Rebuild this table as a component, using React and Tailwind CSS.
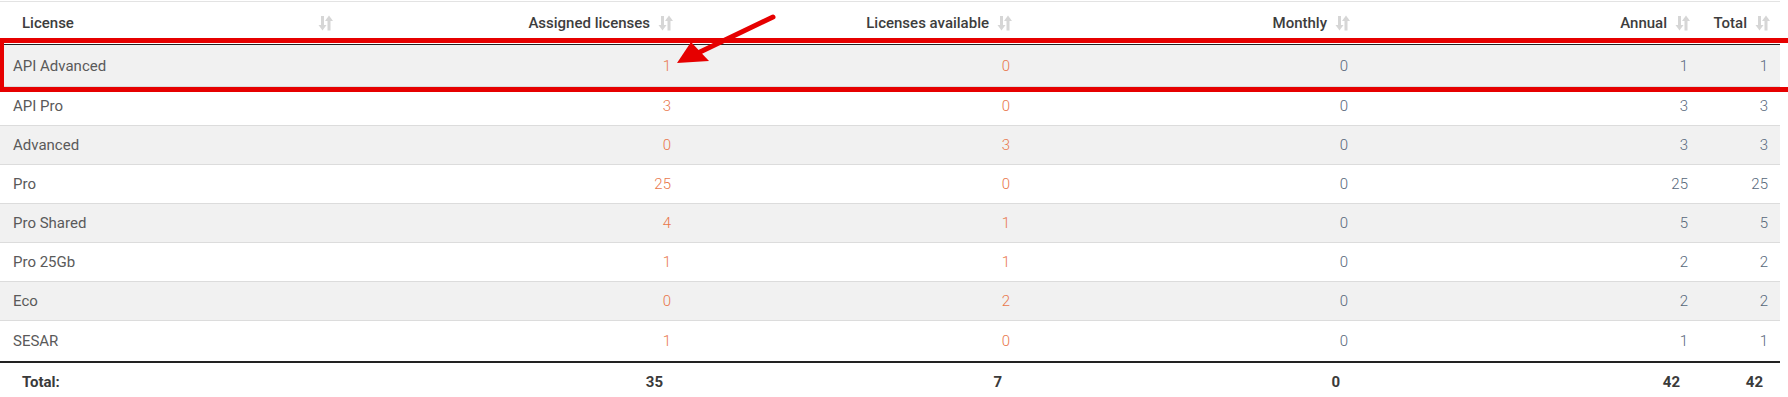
import React from "react";

const cols = "grid grid-cols-[343px_340px_339px_338px_340px_80px]";

const rows = [
  { name: "API Advanced", assigned: 1, available: 0, monthly: 0, annual: 1, total: 1 },
  { name: "API Pro", assigned: 3, available: 0, monthly: 0, annual: 3, total: 3 },
  { name: "Advanced", assigned: 0, available: 3, monthly: 0, annual: 3, total: 3 },
  { name: "Pro", assigned: 25, available: 0, monthly: 0, annual: 25, total: 25 },
  { name: "Pro Shared", assigned: 4, available: 1, monthly: 0, annual: 5, total: 5 },
  { name: "Pro 25Gb", assigned: 1, available: 1, monthly: 0, annual: 2, total: 2 },
  { name: "Eco", assigned: 0, available: 2, monthly: 0, annual: 2, total: 2 },
  { name: "SESAR", assigned: 1, available: 0, monthly: 0, annual: 1, total: 1 },
];

const SortIcon = () => (
  <svg
    className="absolute right-[10px] top-1/2 -translate-y-1/2 w-[15px] h-[16px]"
    viewBox="0 0 15 16"
    fill="#d6d6d6"
  >
    <rect x="3" y="1" width="3" height="10" />
    <path d="M0.5 10 L8.5 10 L4.5 15.5 Z" />
    <rect x="9.5" y="5" width="3" height="10.5" />
    <path d="M7 6 L15 6 L11 0.5 Z" />
  </svg>
);

const Th = ({ children, left }) => (
  <div
    className={`relative flex items-center ${
      left ? "justify-start pl-[22px]" : "justify-end pr-[33px]"
    }`}
  >
    <span>{children}</span>
    <SortIcon />
  </div>
);

export default function App() {
  return (
    <div className="relative w-[1788px] h-[397px] overflow-hidden bg-white font-['Roboto','Liberation_Sans',sans-serif]">
      <div className="w-[1780px] pt-px">
        <div
          className={`${cols} h-[44px] border-t border-b border-t-[#e3e3e3] border-b-[#222] text-[15px] font-medium text-[#3d3d3d]`}
        >
          <Th left>License</Th>
          <Th>Assigned licenses</Th>
          <Th>Licenses available</Th>
          <Th>Monthly</Th>
          <Th>Annual</Th>
          <Th>Total</Th>
        </div>

        {rows.map((r, i) => (
          <div
            key={r.name}
            className={`${cols} text-[15px] font-light ${
              i === 0 ? "h-[42px]" : i === rows.length - 1 ? "h-[40px]" : "h-[39px]"
            } ${i < rows.length - 1 ? "border-b border-[#dcdcdc]" : ""} ${
              i % 2 === 0 ? "bg-[#f1f1f1]" : "bg-white"
            }`}
          >
            <div className="flex items-center pl-[13px] pt-px font-normal text-[#5a5a5a]">{r.name}</div>
            <div className="flex items-center justify-end pr-3 pt-px text-[#e9784c]">{r.assigned}</div>
            <div className="flex items-center justify-end pr-3 pt-px text-[#e9784c]">{r.available}</div>
            <div className="flex items-center justify-end pr-3 pt-px text-[#56677a]">{r.monthly}</div>
            <div className="flex items-center justify-end pr-3 pt-px text-[#56677a]">{r.annual}</div>
            <div className="flex items-center justify-end pr-3 pt-px text-[#56677a]">{r.total}</div>
          </div>
        ))}

        <div
          className={`${cols} h-[40px] border-t-2 border-[#222] text-[15px] font-bold text-[#3a3a3a]`}
        >
          <div className="flex items-center pl-[22px]">Total:</div>
          <div className="flex items-center justify-end pr-[20px]">35</div>
          <div className="flex items-center justify-end pr-[20px]">7</div>
          <div className="flex items-center justify-end pr-[20px]">0</div>
          <div className="flex items-center justify-end pr-[20px]">42</div>
          <div className="flex items-center justify-end pr-[17px]">42</div>
        </div>
      </div>

      {/* highlight box */}
      <div className="absolute left-0 top-[38px] w-[1800px] h-[54px] border-[5px] border-l-4 border-[#e60000]" />

      {/* arrow */}
      <svg className="absolute left-0 top-0 w-[1788px] h-[100px]" viewBox="0 0 1788 100">
        <line x1="773" y1="17" x2="700" y2="52" stroke="#e60000" strokeWidth="5" strokeLinecap="round" />
        <path d="M677 63 L691 42 L709 61 Z" fill="#e60000" />
      </svg>
    </div>
  );
}
